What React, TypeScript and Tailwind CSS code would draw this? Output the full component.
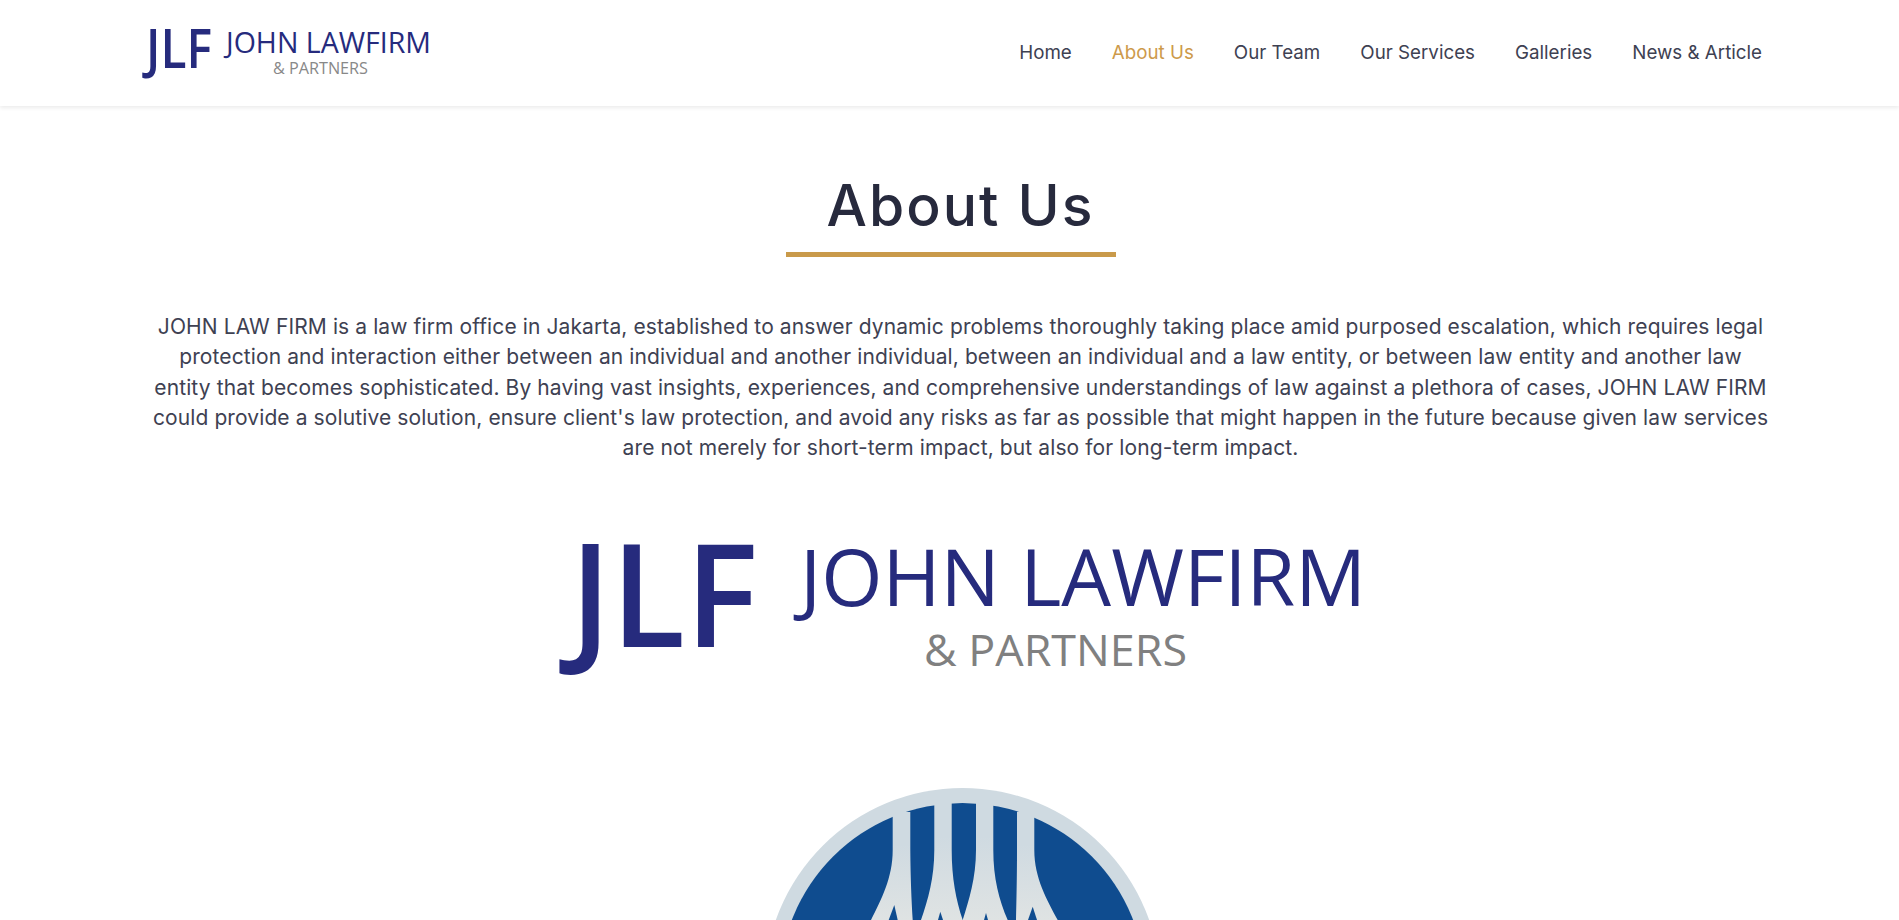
const NAV = ["Home", "About Us", "Our Team", "Our Services", "Galleries", "News & Article"];

const INTRO = [
  "JOHN LAW FIRM is a law firm office in Jakarta, established to answer dynamic problems thoroughly taking place amid purposed escalation, which requires legal",
  "protection and interaction either between an individual and another individual, between an individual and a law entity, or between law entity and another law",
  "entity that becomes sophisticated. By having vast insights, experiences, and comprehensive understandings of law against a plethora of cases, JOHN LAW FIRM",
  "could provide a solutive solution, ensure client's law protection, and avoid any risks as far as possible that might happen in the future because given law services",
  "are not merely for short-term impact, but also for long-term impact.",
];

function HeaderLogo() {
  return (
    <svg width="310" height="92" viewBox="0 0 310 92" className="block" role="img" aria-label="JLF John Lawfirm & Partners">
      <g fontFamily="'Open Sans', sans-serif">
        <text x="15" y="61" fontSize="54" fontWeight="600" fill="#262b7d" textLength="66" lengthAdjust="spacingAndGlyphs">JLF</text>
        <text x="95" y="46" fontSize="29" fontWeight="500" fill="#262b7d" textLength="205" lengthAdjust="spacingAndGlyphs">JOHN LAWFIRM</text>
        <text x="142" y="67" fontSize="16" fontWeight="500" fill="#888888" textLength="95" lengthAdjust="spacingAndGlyphs">&amp; PARTNERS</text>
      </g>
    </svg>
  );
}

function BigLogo() {
  return (
    <svg width="820" height="210" viewBox="0 0 820 210" className="block" role="img" aria-label="JLF John Lawfirm & Partners">
      <g fontFamily="'Open Sans', sans-serif">
        <text x="19" y="164" fontSize="144" fontWeight="600" fill="#262b7d" textLength="188" lengthAdjust="spacingAndGlyphs">JLF</text>
        <text x="249" y="123" fontSize="78" fontWeight="500" fill="#262b7d" textLength="566" lengthAdjust="spacingAndGlyphs">JOHN LAWFIRM</text>
        <text x="373" y="183" fontSize="44" fontWeight="500" fill="#808080" textLength="263" lengthAdjust="spacingAndGlyphs">&amp; PARTNERS</text>
      </g>
    </svg>
  );
}

function Emblem() {
  return (
    <svg width="440" height="132" viewBox="0 0 440 132" className="block" aria-hidden="true">
      <defs>
        <linearGradient id="pillar" x1="0" y1="0" x2="0" y2="1">
          <stop offset="0.3" stopColor="#cfdae1" />
          <stop offset="1" stopColor="#dfe3e3" />
        </linearGradient>
      </defs>
      <circle cx="221.500" cy="198" r="198" fill="#cfdae1" />
      <circle cx="221.500" cy="198" r="183" fill="#0f4c8f" />
      <g fill="url(#pillar)">
        <path d="M151.700 24H169.300V62C169.500 90 170.500 112 171.700 132H130C140 112 151.700 90 151.700 62Z" />
        <path d="M193.300 12H210.700V62C210.700 90 215 112 221.700 132H180C187 112 193.300 90 193.300 62Z" />
        <path d="M235 12H252.300V62C252.300 90 258 112 266.700 132H221.700C228 112 235 90 235 62Z" />
        <path d="M276 24H293.300V62C293.300 90 306 112 316.700 132H275C275.500 112 276 90 276 62Z" />
      </g>
      <g fill="#0f4c8f">
        <path d="M153.300 117L147.700 132H156.700Z" />
        <path d="M199.300 123.700L197 132H202Z" />
        <path d="M245 125L243 132H247Z" />
        <path d="M291.700 118.700L287 132H296Z" />
      </g>
    </svg>
  );
}

export default function App() {
  return (
    <div className="h-[920px] overflow-hidden bg-white font-['Inter',sans-serif]">
      <header className="flex h-[106px] items-center justify-between pl-[131px] pr-[137px] shadow-[0_2px_4px_rgba(0,0,0,0.08)]">
        <HeaderLogo />
        <nav className="flex gap-10 text-[18.75px] text-[#3e4152]">
          {NAV.map((item) => (
            <a key={item} href="#" className={item === "About Us" ? "text-[#cd9a4b]" : ""}>
              {item}
            </a>
          ))}
        </nav>
      </header>

      <main className="flex flex-col items-center">
        <h1 className="mt-[64px] pl-[22px] text-[57px] leading-[72px] font-medium tracking-[0.035em] text-[#272a3d]">About Us</h1>
        <div className="mt-[10px] ml-[2px] h-[5px] w-[330px] bg-[#c99a4a]" />
        <p className="mt-[55px] pl-[22px] text-center text-[21px] leading-[30.25px] tracking-[0.005em] whitespace-nowrap text-[#3e4152]">
          {INTRO.map((line) => (
            <span key={line} className="block">{line}</span>
          ))}
        </p>
        <div className="mt-[20px] pl-[22px]">
          <BigLogo />
        </div>
        <div className="mt-[95px] pl-[22px]">
          <Emblem />
        </div>
      </main>
    </div>
  );
}
